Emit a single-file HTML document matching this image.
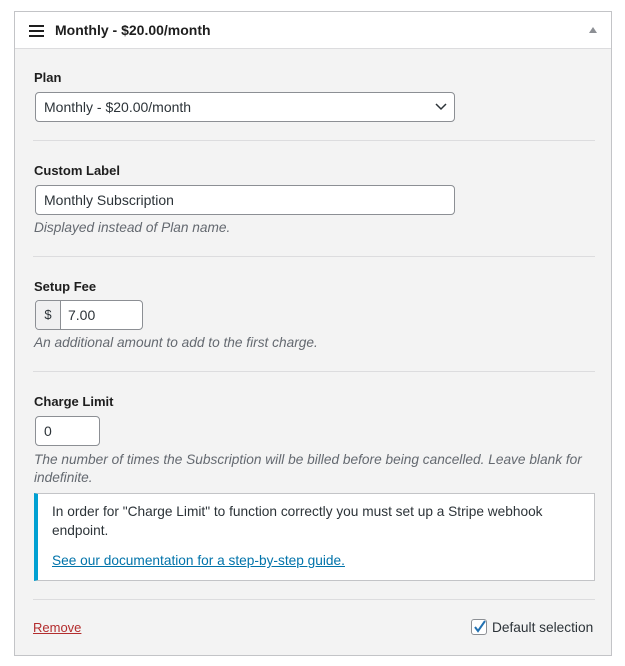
<!DOCTYPE html>
<html><head><style>
body{margin:0;background:#fff;font-family:"Liberation Sans",Arial,sans-serif;font-size:13px;color:#1e1e1e;}
.a{position:absolute;}
.box{left:14px;top:11px;width:596px;height:643px;border:1px solid #c3c4c7;background:#f3f3f3;}
.hdr{left:15px;top:12px;width:596px;height:36px;background:#fff;border-bottom:1px solid #dcdcde;}
.lbl{font-weight:bold;font-size:13px;color:#1e1e1e;}
.inp{background:#fff;border:1px solid #8c8f94;border-radius:4px;box-sizing:border-box;font-size:14px;color:#2c3338;padding-left:8px;}
.help{font-style:italic;color:#646970;font-size:13.7px;}
.hr{left:33px;width:562px;height:1px;background:#dcdcde;}
</style></head><body>
<div class="a box"></div>
<div class="a hdr"></div>
<div class="a" style="left:29px;top:25px;width:15px;height:2px;background:#1e1e1e;box-shadow:0 5px 0 #1e1e1e,0 10px 0 #1e1e1e"></div>
<div class="a" style="left:55px;top:22px;font-weight:bold;font-size:14px;">Monthly - $20.00/month</div>
<div class="a" style="left:589px;top:27px;width:0;height:0;border-left:4px solid transparent;border-right:4px solid transparent;border-bottom:6px solid #8c8f94"></div>

<div class="a lbl" style="left:34px;top:70px">Plan</div>
<div class="a inp" style="left:35px;top:92px;width:420px;height:30px;line-height:28px;">Monthly - $20.00/month</div>
<svg class="a" style="left:434px;top:101px" width="14" height="10"><path d="M2 3l5 5 5-5" fill="none" stroke="#2c3338" stroke-width="1.5"/></svg>
<div class="a hr" style="top:140px"></div>

<div class="a lbl" style="left:34px;top:163px">Custom Label</div>
<div class="a inp" style="left:35px;top:185px;width:420px;height:30px;line-height:28px;">Monthly Subscription</div>
<div class="a help" style="left:34px;top:220px">Displayed instead of Plan name.</div>
<div class="a hr" style="top:256px"></div>

<div class="a lbl" style="left:34px;top:279px">Setup Fee</div>
<div class="a inp" style="left:35px;top:300px;width:108px;height:30px;line-height:28px;"></div>
<div class="a" style="left:36px;top:301px;width:24px;height:28px;background:#f0f0f1;border-right:1px solid #8c8f94;border-radius:3px 0 0 3px;text-align:center;line-height:28px;font-size:13px;color:#2c3338">$</div>
<div class="a" style="left:68px;top:301px;line-height:28px;font-size:14px;color:#2c3338">7.00</div>
<div class="a help" style="left:34px;top:335px">An additional amount to add to the first charge.</div>
<div class="a hr" style="top:371px"></div>

<div class="a lbl" style="left:34px;top:394px">Charge Limit</div>
<div class="a inp" style="left:35px;top:416px;width:65px;height:30px;line-height:28px;">0</div>
<div class="a help" style="left:34px;top:451px;width:570px;line-height:18px">The number of times the Subscription will be billed before being cancelled. Leave blank for indefinite.</div>
<div class="a" style="left:34px;top:493px;width:556px;height:86px;background:#fff;border:1px solid #c3c4c7;border-left:4px solid #00a0d2;"></div>
<div class="a" style="left:52px;top:502px;width:510px;line-height:19px;font-size:13.7px;color:#2c3338">In order for "Charge Limit" to function correctly you must set up a Stripe webhook endpoint.</div>
<div class="a" style="left:52px;top:553px;font-size:13.7px;color:#0073aa;text-decoration:underline">See our documentation for a step-by-step guide.</div>
<div class="a hr" style="top:599px"></div>

<div class="a" style="left:33px;top:620px;color:#b32d2e;text-decoration:underline">Remove</div>
<div class="a" style="left:471px;top:619px;width:14px;height:14px;border:1px solid #8c8f94;border-radius:3px;background:#fff"></div>
<svg class="a" style="left:472px;top:619px" width="16" height="16"><path d="M3 8l3 4 7-10" fill="none" stroke="#2271b1" stroke-width="2"/></svg>
<div class="a" style="left:492px;top:620px;font-size:13.7px;color:#2c3338">Default selection</div>
</body></html>
